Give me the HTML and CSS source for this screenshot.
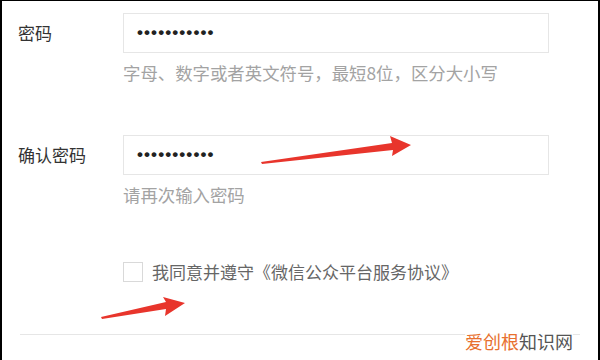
FILE: index.html
```html
<!DOCTYPE html>
<html lang="zh-CN">
<head>
  <meta charset="UTF-8" />
  <meta name="viewport" content="width=device-width, initial-scale=1" />
  <title>注册 - 设置密码</title>
  <link rel="stylesheet" href="styles.css">
</head>
<body>
  <div class="frame">
    <div class="form">
      <div class="field-row">
        <label class="field-label">密码</label>
        <div class="field-input"><span class="dots">•••••••••••</span></div>
        <p class="field-hint">字母、数字或者英文符号，最短8位，区分大小写</p>
      </div>

      <div class="field-row row-confirm">
        <label class="field-label">确认密码</label>
        <div class="field-input"><span class="dots">•••••••••••</span></div>
        <p class="field-hint">请再次输入密码</p>
      </div>

      <div class="agree-row">
        <span class="checkbox"></span>
        <span class="agree-text">我同意并遵守《微信公众平台服务协议》</span>
      </div>

      <div class="divider"></div>
    </div>

    <!-- annotation arrows drawn on top of the screenshot -->
    <svg class="arrows" viewBox="2 1 596 359" width="596" height="359">
      <polygon points="261,162 392,143 390,136 411,145 392,156 393,150 262,164" fill="#e8352c" />
      <polygon points="101,317 166,302 163,297 185,303 165,316 166,309 102,319" fill="#e8352c" />
    </svg>

    <div class="watermark"><span class="wm-orange">爱创根</span>知识网</div>
  </div>
</body>
</html>
```

FILE: styles.css
```css
body {
  margin: 0;
  background: #fff;
  font-family: "Noto Sans CJK SC", "Liberation Sans", sans-serif;
}
.frame {
  position: relative;
  width: 600px;
  height: 360px;
  box-sizing: border-box;
  border-top: 1px solid #000;
  border-left: 2px solid #000;
  border-right: 2px solid #000;
  overflow: hidden;
  background: #fff;
}
.form {
  padding-top: 12px;
}
.field-row {
  display: grid;
  grid-template-columns: 105px 426px;
  align-items: center;
  padding-left: 16px;
}
.row-confirm {
  margin-top: 52px;
}
.field-label {
  font-size: 17px;
  line-height: 20px;
  color: #333;
}
.field-input {
  height: 40px;
  box-sizing: border-box;
  border: 1px solid #e6e6e6;
  display: flex;
  align-items: center;
  padding-left: 13px;
}
.dots {
  font-family: "Liberation Sans", sans-serif;
  font-size: 17px;
  font-weight: bold;
  letter-spacing: 1.1px;
  color: #222;
}
.field-hint {
  grid-column: 2;
  margin: 10px 0 0;
  font-size: 17.4px;
  line-height: 20px;
  color: #a3a3a3;
}
.agree-row {
  display: flex;
  align-items: center;
  gap: 9px;
  margin-top: 57px;
  padding-left: 121px;
}
.checkbox {
  width: 20px;
  height: 20px;
  box-sizing: border-box;
  border: 1px solid #d9d9d9;
  background: #fff;
}
.agree-text {
  font-size: 17px;
  line-height: 20px;
  color: #666;
}
.divider {
  margin: 52px 18px 0;
  border-top: 1px solid #e6e6e6;
}
.arrows {
  position: absolute;
  left: 0;
  top: 0;
}
.watermark {
  position: absolute;
  right: 25px;
  top: 330px;
  font-size: 18px;
  line-height: 20px;
  color: #555;
  background: rgba(255, 255, 255, 0.85);
}
.wm-orange {
  color: #e8702e;
}
```
